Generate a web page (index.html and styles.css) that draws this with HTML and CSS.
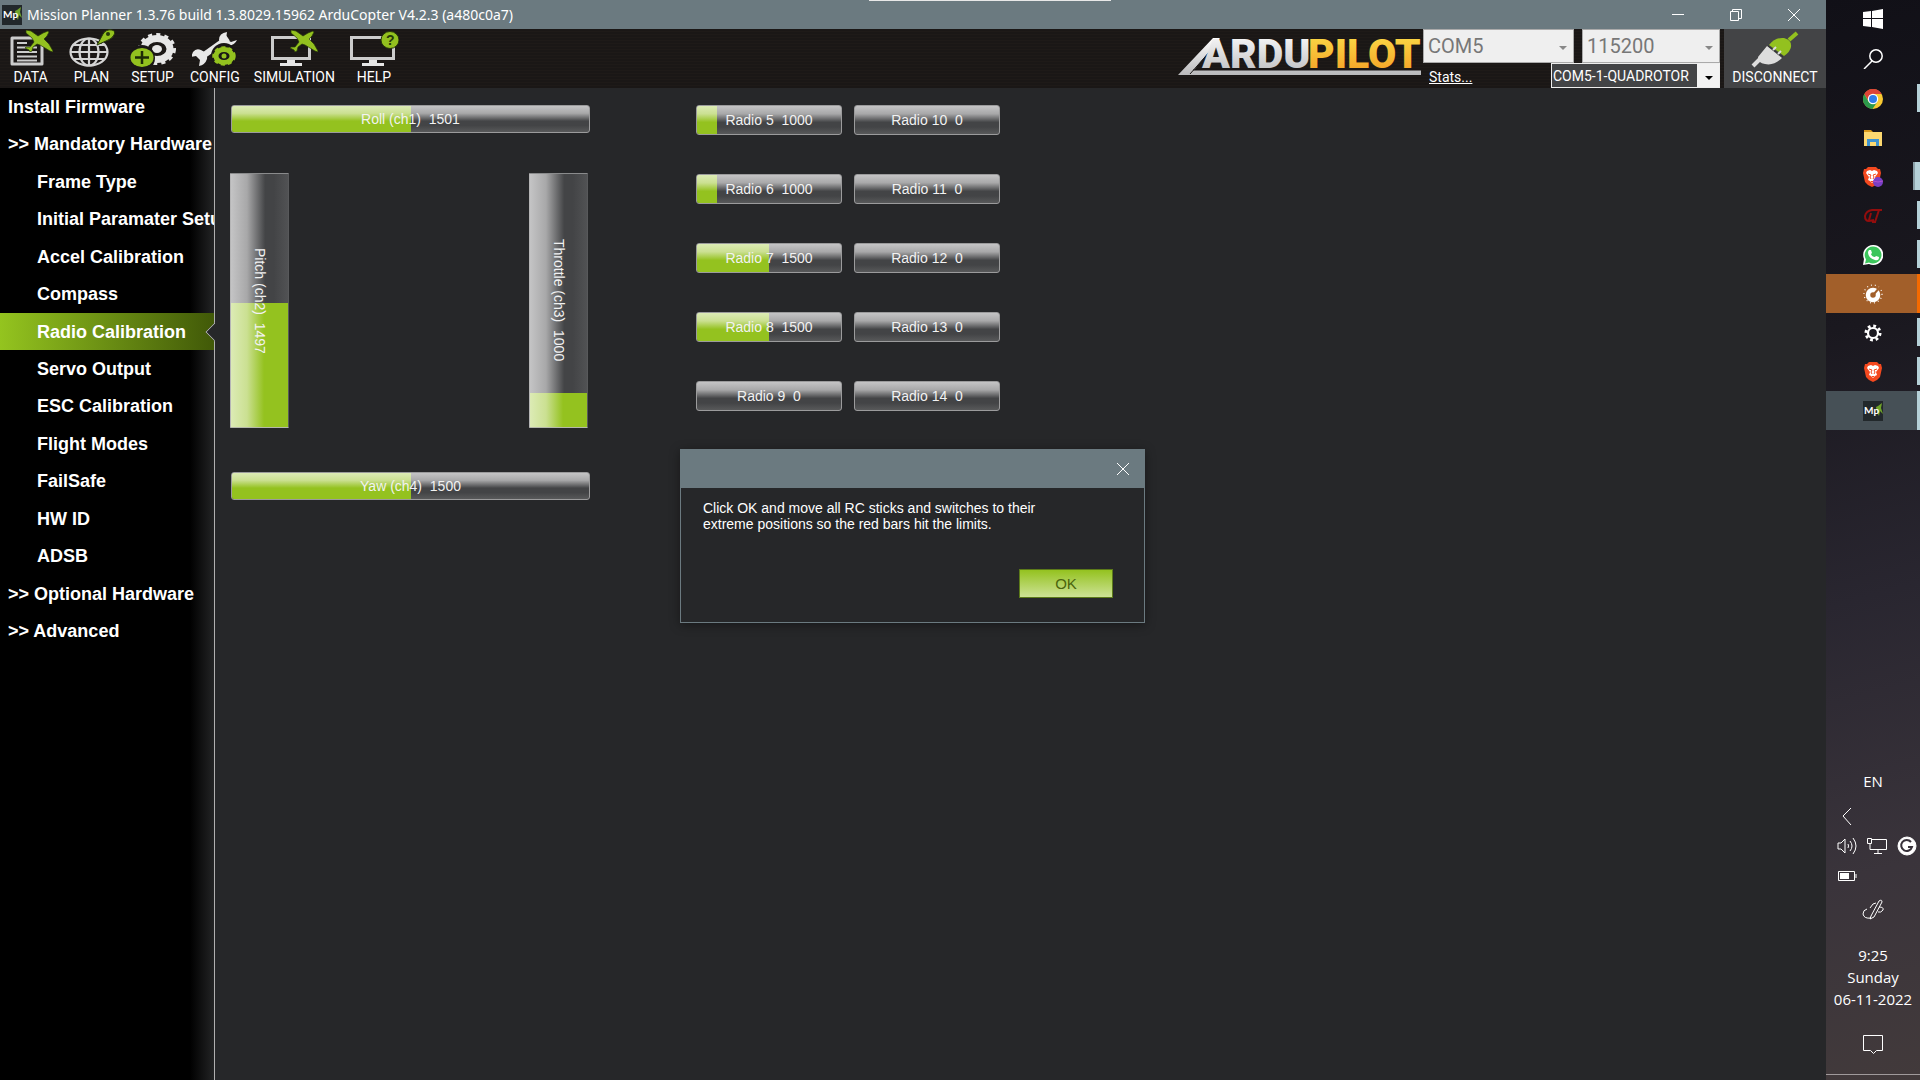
FILE: index.html
```html
<!DOCTYPE html>
<html lang="en">
<head>
<meta charset="utf-8">
<title>Mission Planner</title>
<link rel="stylesheet" href="styles.css">
</head>
<body>
<svg class="defs" aria-hidden="true">
  <defs>
    <linearGradient id="silver" x1="0" y1="0" x2="0" y2="1"><stop offset="0" stop-color="#fff"/><stop offset="1" stop-color="#b9b9bb"/></linearGradient>
    <linearGradient id="gold" x1="0" y1="0" x2="0" y2="1"><stop offset="0" stop-color="#fbe04a"/><stop offset="1" stop-color="#f49a22"/></linearGradient>
  </defs>
  <symbol id="plane" viewBox="0 0 28 22">
    <path fill="#93c11f" stroke="#26380a" stroke-width=".7" d="M1 0l5 1 7 5 5-3 5-2 1 1-2 4-3 3 5 5 4 7v1l-3-1-10-6-3-1-4 3-1 4-2 1-1-2-4-2 1-1h4l4-5-2-4-6-5z"/>
  </symbol>
  <symbol id="mp" viewBox="0 0 20 20">
    <rect width="20" height="20" fill="#22282b"/>
    <path d="M13 6l2-1 4-3-1 5 2 6-3-3-1 5-2-4z" fill="#6fa32a"/>
    <text x="1" y="13" font-family="Lato, sans-serif" font-size="10" font-weight="700" fill="#fff">Mp</text>
  </symbol>
  <symbol id="brave" viewBox="0 0 18 20">
    <path fill="#f4491f" d="M5 0h8l2 2 2 0 1 4-2 9-3 3-4 2-4-2-3-3L0 6l1-4 2 0z"/>
    <path fill="#fff" d="M4 4l3-1 2 1 2-1 3 1 1 2-3 4 1 3-2 1-2 2-2-2-2-1 1-3-3-4z"/>
    <path fill="none" stroke="#f4491f" d="M5 7l3 1-1 2 1 2M13 7l-3 1 1 2-1 2M8 14l1 1 1-1"/>
  </symbol>
</svg>

<div class="app">
  <header class="titlebar">
    <svg class="title-icon" width="20" height="20"><use href="#mp"/></svg>
    <h1 class="title">Mission Planner 1.3.76 build 1.3.8029.15962 ArduCopter V4.2.3 (a480c0a7)</h1>
    <div class="window-buttons">
      <button type="button" aria-label="Minimize"><svg width="14" height="14"><path d="M1 6.500h12"/></svg></button>
      <button type="button" aria-label="Restore"><svg width="14" height="14"><path d="M1.500 3.500h8v9h-8zM3.500 3V1.500h9v9H10"/></svg></button>
      <button type="button" aria-label="Close"><svg width="14" height="14"><path d="M1 1l12 12M13 1L1 13"/></svg></button>
    </div>
    <span class="screen-strip"></span>
  </header>

  <div class="toolbar">
    <nav class="tools" aria-label="Screens">
      <button type="button" class="tool">
        <svg width="44" height="40" viewBox="0 0 44 40"><path d="M3 9h30v26H3z" fill="none" stroke="#ccc" stroke-width="3" stroke-linejoin="round"/><path d="M8 14h10M8 18.500h20M8 23h20M8 27.500h20M8 31.500h20" stroke="#ccc" stroke-width="2"/><use href="#plane" x="16" y="1" width="28" height="22"/></svg>
        <span>DATA</span></button>
      <button type="button" class="tool">
        <svg width="46" height="40" viewBox="0 0 46 40"><g fill="none" stroke="#d4d4d4" stroke-width="2.200"><ellipse cx="20" cy="23" rx="18.500" ry="13.500"/><ellipse cx="20" cy="23" rx="9.500" ry="13.500"/><path d="M20 9v28M1 23h38M5 16h30M5 30h30"/></g><path d="M28 16l6-11q3-5 9-4 4 1 2 5-2 4-8 6z" fill="#93c11f" stroke="#26380a"/><circle cx="39" cy="5" r="2" fill="#26380a"/></svg>
        <span>PLAN</span></button>
      <button type="button" class="tool">
        <svg width="46" height="40" viewBox="0 0 46 40"><ellipse cx="27" cy="20" rx="13" ry="10.500" fill="none" stroke="#e6e6e6" stroke-width="7"/><ellipse cx="27" cy="20" rx="17" ry="14" fill="none" stroke="#e6e6e6" stroke-width="4" stroke-dasharray="4 4"/><ellipse cx="27" cy="20" rx="5" ry="4" fill="#e6e6e6"/><circle cx="12" cy="29" r="13" fill="#1a1716"/><ellipse cx="12" cy="28.500" rx="11.500" ry="9.500" fill="#93c11f"/><path d="M12 22v13M5 28.500h14" stroke="#1d2a06" stroke-width="2.500"/></svg>
        <span>SETUP</span></button>
      <button type="button" class="tool">
        <svg width="46" height="40" viewBox="0 0 46 40"><path d="M8 29L36 9" stroke="#e8e8e8" stroke-width="6"/><path d="M35 3q-8 1-8 8 2 7 9 6 7-1 9-6l-6 2-5-3zM1 23q3-4 8-2 7 3 6 9-2 6-8 7l1-6-4-4-5 1z" fill="#e8e8e8"/><circle cx="32" cy="27" r="13" fill="#1a1716"/><ellipse cx="32" cy="27" rx="8" ry="6.500" fill="none" stroke="#93c11f" stroke-width="5"/><ellipse cx="32" cy="27" rx="10.500" ry="8.500" fill="none" stroke="#93c11f" stroke-width="2.500" stroke-dasharray="4 3"/><circle cx="32" cy="27" r="2.500" fill="#93c11f"/></svg>
        <span>CONFIG</span></button>
      <button type="button" class="tool">
        <svg width="48" height="40" viewBox="0 0 48 40"><path d="M2.500 8.500h37v21h-37z" fill="none" stroke="#ccc" stroke-width="3"/><path d="M17 31h8v3h7v3H10v-3h7z" fill="#e6e6e6"/><use href="#plane" x="20" y="1" width="28" height="22"/></svg>
        <span>SIMULATION</span></button>
      <button type="button" class="tool">
        <svg width="50" height="40" viewBox="0 0 50 40"><path d="M2.500 8.500h42v21h-42z" fill="none" stroke="#ccc" stroke-width="3"/><path d="M20 31h8v3h7v3H13v-3h7z" fill="#e6e6e6"/><ellipse cx="41" cy="11" rx="9" ry="8.500" fill="#93c11f" stroke="#26380a"/><text x="37" y="16" font-family="Liberation Sans, sans-serif" font-weight="700" font-size="14" fill="#26380a">?</text></svg>
        <span>HELP</span></button>
    </nav>
    <a class="logo" href="#" aria-label="ArduPilot">
      <svg width="246" height="50" viewBox="0 0 246 50">
        <path fill="url(#silver)" d="M1 46L36 9h7L17 41h227v5z"/>
        <path d="M13 45L42 12M16 41h228" stroke="#1a1716" stroke-width="1" fill="none"/>
        <g class="logo-text"><text x="25" y="39" fill="url(#silver)">ARDU</text><text x="131" y="39" fill="url(#gold)">PILOT</text></g>
      </svg>
    </a>
    <div class="connection">
      <div class="picker port"><select aria-label="Port" disabled><option>COM5</option></select></div>
      <div class="picker baud"><select aria-label="Baud rate" disabled><option>115200</option></select></div>
      <a class="stats" href="#">Stats...</a>
      <div class="picker vehicle"><select aria-label="Vehicle"><option>COM5-1-QUADROTOR</option></select></div>
    </div>
    <button type="button" class="tool disconnect">
      <svg width="48" height="40" viewBox="0 0 48 40"><path d="M2 37l8-8" stroke="#ddd" stroke-width="4"/><path d="M7 28l9-11 15 12q-8 8-17 6-7-1-7-7z" fill="#ddd"/><path d="M18 16q6-8 15-7 8 2 7 9-1 5-7 9z" fill="#93c11f"/><path d="M38 11l8-7" stroke="#93c11f" stroke-width="4"/><path d="M17 17l15 11" stroke="#333" stroke-width="1"/><path d="M22 21l3-3M27 25l3-3" stroke="#ddd" stroke-width="2"/></svg>
      <span>DISCONNECT</span></button>
  </div>

  <div class="content">
    <aside class="sidebar">
      <nav class="menu" aria-label="Setup">
        <a href="#">Install Firmware</a>
        <a href="#">&gt;&gt; Mandatory Hardware</a>
        <a class="sub" href="#">Frame Type</a>
        <a class="sub" href="#">Initial Paramater Setup</a>
        <a class="sub" href="#">Accel Calibration</a>
        <a class="sub" href="#">Compass</a>
        <a class="sub current" href="#" aria-current="page">Radio Calibration</a>
        <a class="sub" href="#">Servo Output</a>
        <a class="sub" href="#">ESC Calibration</a>
        <a class="sub" href="#">Flight Modes</a>
        <a class="sub" href="#">FailSafe</a>
        <a class="sub" href="#">HW ID</a>
        <a class="sub" href="#">ADSB</a>
        <a href="#">&gt;&gt; Optional Hardware</a>
        <a href="#">&gt;&gt; Advanced</a>
      </nav>
    </aside>

    <main class="panel">
      <section class="sticks">
        <div class="bar"><i class="fill" style="width:50%"></i><span>Roll (ch1)&nbsp; 1501</span></div>
        <div class="columns">
          <div class="bar tall"><i class="fill" style="height:49%"></i><span>Pitch (ch2)&nbsp; 1497</span></div>
          <div class="bar tall"><i class="fill" style="height:13.500%"></i><span>Throttle (ch3)&nbsp; 1000</span></div>
        </div>
        <div class="bar"><i class="fill" style="width:50%"></i><span>Yaw (ch4)&nbsp; 1500</span></div>
      </section>
      <section class="radios">
        <div class="bar"><i class="fill" style="width:14%"></i><span>Radio 5&nbsp; 1000</span></div>
        <div class="bar"><span>Radio 10&nbsp; 0</span></div>
        <div class="bar"><i class="fill" style="width:14%"></i><span>Radio 6&nbsp; 1000</span></div>
        <div class="bar"><span>Radio 11&nbsp; 0</span></div>
        <div class="bar"><i class="fill" style="width:50%"></i><span>Radio 7&nbsp; 1500</span></div>
        <div class="bar"><span>Radio 12&nbsp; 0</span></div>
        <div class="bar"><i class="fill" style="width:50%"></i><span>Radio 8&nbsp; 1500</span></div>
        <div class="bar"><span>Radio 13&nbsp; 0</span></div>
        <div class="bar"><span>Radio 9&nbsp; 0</span></div>
        <div class="bar"><span>Radio 14&nbsp; 0</span></div>
      </section>

      <div class="dialog" role="dialog" aria-describedby="dialog-text">
        <div class="dialog-head"><button type="button" aria-label="Close"><svg width="14" height="14"><path d="M1 1l12 12M13 1L1 13"/></svg></button></div>
        <p id="dialog-text">Click OK and move all RC sticks and switches to their<br>extreme positions so the red bars hit the limits.</p>
        <button type="button" class="ok">OK</button>
      </div>
    </main>
  </div>
</div>

<aside class="taskbar">
  <div class="apps">
    <button type="button" class="task" aria-label="Start"><svg width="20" height="20"><path fill="#fff" d="M0 3l8-1v7H0zM9 2l11-2v9H9zM0 10h8v8l-8-1zM9 10h11v10L9 18z"/></svg></button>
    <button type="button" class="task" aria-label="Search"><svg width="20" height="20" fill="none" stroke="#fff" stroke-width="1.500"><circle cx="13" cy="7" r="6.200"/><path d="M9 12l-8 8"/></svg></button>
    <button type="button" class="task open" aria-label="Chrome"><svg width="20" height="20"><circle cx="10" cy="10" r="10" fill="#f9c932"/><path fill="#dc4437" d="M10 10V5h8.700A10 10 0 0 0 1.300 5l4.400 7.500z"/><path fill="#2b9a4c" d="M1.300 5A10 10 0 0 0 9.500 20l5-7.500-4.500 2-4.500-2z"/><circle cx="10" cy="10" r="5.200" fill="#fff"/><circle cx="10" cy="10" r="4" fill="#2f7de9"/></svg></button>
    <button type="button" class="task" aria-label="File Explorer"><svg width="20" height="20"><path fill="#d99a1c" d="M1 2h7l2 2v3H1z"/><path fill="#fcd870" d="M1 4h18v14H1z"/><path fill="#3f93cf" d="M4 11h12v7h-3v-4H7v4H4z"/></svg></button>
    <button type="button" class="task open double" aria-label="Brave Private"><svg width="20" height="20"><use href="#brave" width="18" height="20"/><circle cx="15" cy="15" r="5" fill="#7a3fc4"/><path d="M10 14q5 2 10 0" stroke="#b04fd0" fill="none"/></svg></button>
    <button type="button" class="task open" aria-label="Editor"><svg width="22" height="16"><path fill="none" stroke="#930d0d" stroke-width="2" d="M20 2H10Q4 3 3 8q0 5 4 5l5-1M17 2l-4 12M10 14h4M9 5L7 12"/></svg></button>
    <button type="button" class="task open" aria-label="WhatsApp"><svg width="20" height="20"><path fill="#fff" d="M10 0a10 10 0 1 1-4 19l-6 1 1-6A10 10 0 0 1 10 0z"/><path fill="#3cc65c" d="M10 1.500a8.500 8.500 0 1 1-4 16l-4 1 1-4a8.500 8.500 0 0 1 7-13z"/><path fill="#fff" d="M6 5l2 0 1 3-1 1q1 3 4 3l1-1 3 1q0 4-4 3-7-2-7-8z"/></svg></button>
    <button type="button" class="task alert" aria-label="Timer"><svg width="20" height="20"><circle cx="10" cy="10" r="9" fill="none" stroke="#fff" stroke-dasharray="1 3" stroke-width="1.200"/><circle cx="10" cy="11" r="5" fill="none" stroke="#fff" stroke-width="4.500"/><path d="M11 10l6-7" stroke="#a25f2a" stroke-width="2"/></svg></button>
    <button type="button" class="task open" aria-label="Settings"><svg width="18" height="18"><circle cx="9" cy="9" r="5" fill="none" stroke="#fff" stroke-width="2.200"/><circle cx="9" cy="9" r="7" fill="none" stroke="#fff" stroke-width="3" stroke-dasharray="2.750 2.750"/></svg></button>
    <button type="button" class="task open" aria-label="Brave"><svg width="18" height="20"><use href="#brave" width="18" height="20"/></svg></button>
    <button type="button" class="task open active" aria-label="Mission Planner"><svg width="20" height="20"><use href="#mp"/></svg></button>
  </div>
  <div class="tray">
    <span class="lang">EN</span>
    <div class="tray-icons">
      <svg width="20" height="20"><path d="M14 2L6 10l8 9"/></svg><span></span><span></span>
      <svg width="20" height="20"><path d="M1 7h3l4-4v14l-4-4H1zM11 8q1 2 0 4M13 5q4 5 0 10M16 2q6 8 0 16"/></svg>
      <svg width="20" height="20"><path d="M5 3.500h14.500v10H3V8M.500 2.500h4v5h-4zM11 14v3M7 17.500h8"/></svg>
      <svg width="20" height="20"><circle cx="10" cy="10" r="9" fill="#fff"/><path d="M14 6a5.500 5.500 0 1 0 1 5h-4" stroke="#38323a" stroke-width="2"/></svg>
      <svg width="20" height="20"><path d="M1.500 5.500h16v9h-16zM19 8v4"/><path fill="#fff" stroke="none" d="M3 7h9v6H3z"/></svg>
    </div>
    <svg class="pen" width="22" height="22"><path d="M5 10q-4 1-4 5 1 5 8 4M9 17L17 2q3-2 3 1l-8 15-4 2zM17 8q5 0 4 3-2 3-5 2M8 9l3-4 3-1"/></svg>
    <div class="clock"><span>9:25</span><span>Sunday</span><span>06-11-2022</span></div>
    <svg class="notes" width="20" height="21"><path d="M.500.500h19v15h-6l-3 3-3-3h-7z"/></svg>
  </div>
</aside>
</body>
</html>
```
FILE: styles.css
```css
* { box-sizing: border-box; }
body {
  margin: 0;
  min-height: 100vh;
  display: flex;
  background: #262729;
  color: #fff;
  font: 14px/16px "Liberation Sans", Arial, sans-serif;
}
h1, p { margin: 0; font-weight: inherit; }
button { padding: 0; border: 0; background: none; color: inherit; font: inherit; }
a { color: inherit; text-decoration: none; }
svg { display: block; }
.defs { position: absolute; width: 0; height: 0; }

.app { flex: 1; min-width: 0; display: flex; flex-direction: column; }

/* Title bar */
.titlebar {
  position: relative;
  display: flex;
  align-items: center;
  height: 29px;
  padding-left: 2px;
  background: #6b7a80;
}
.title { flex: 1; margin-left: 5px; font: 14px/28px "Noto Sans", "Open Sans", sans-serif; }
.window-buttons { display: flex; margin-right: 3px; }
.window-buttons button { width: 58px; display: grid; place-items: center; }
.window-buttons svg, .dialog-head svg { fill: none; stroke: #fff; }
.screen-strip { position: absolute; top: 0; left: 869px; width: 242px; height: 1px; background: #e8e8e8; }

/* Toolbar */
.toolbar {
  display: flex;
  height: 59px;
  background: repeating-linear-gradient(#1a1716 0 2px, #1e1a18 2px 3px);
}
.tools { display: flex; flex: 1; }
.tool {
  display: flex;
  flex-direction: column;
  align-items: center;
  min-width: 61px;
  padding: 0 7px;
  font: 14px/16px Roboto, "Liberation Sans", sans-serif;
}
.logo-text { font: 900 41px Roboto, sans-serif; }
.connection {
  display: grid;
  grid-template-columns: 127px 24px 8px 138px;
  grid-template-rows: 34px 25px;
  width: 297px;
}
.picker { position: relative; }
.picker select {
  appearance: none;
  width: 100%;
  height: 100%;
  margin: 0;
  padding: 0 4px;
  border: 1px solid #aaa;
  border-radius: 0;
  background: #efefef;
  color: #777;
  opacity: 1;
  font: 20px/30px Roboto, "Liberation Sans", sans-serif;
}
.picker::after {
  content: "";
  position: absolute;
  right: 7px;
  top: 50%;
  border: 4px solid transparent;
  border-top-color: #888;
  border-bottom: 0;
}
.port { grid-column: 1 / 3; }
.baud { grid-column: 4; }
.stats {
  grid-column: 1;
  padding: 6px;
  font: 14px/16px Roboto, "Liberation Sans", sans-serif;
  text-decoration: underline;
}
.vehicle { grid-column: 2 / 5; margin-left: 1px; }
.vehicle select {
  padding: 0 1px;
  border-color: #eee;
  background: linear-gradient(to left, #f2f2f2 22px, #434446 22px);
  color: #fff;
  font-size: 14px;
  line-height: 20px;
}
.vehicle::after { border-top-color: #000; }
.disconnect { width: 102px; margin-left: 4px; background: #434446; }

/* Setup menu */
.content { flex: 1; display: flex; }
.sidebar {
  width: 215px;
  border-right: 1px solid #b0b0b0;
  background: linear-gradient(to right, #000 190px, #232425);
}
.menu { display: grid; grid-auto-rows: 1fr; height: 562px; }
.menu a {
  display: flex;
  align-items: center;
  padding-left: 8px;
  overflow: hidden;
  white-space: nowrap;
  font-size: 18px;
  font-weight: 700;
}
.menu .sub { padding-left: 37px; }
.menu .current {
  position: relative;
  overflow: visible;
  background: linear-gradient(to right, #94c41f, #415908);
}
.current::after {
  content: "";
  position: absolute;
  right: -8px;
  top: 12px;
  width: 13px;
  height: 13px;
  border: 1px solid #b0b0b0;
  border-width: 0 0 1px 1px;
  background: #262729;
  transform: rotate(45deg);
  clip-path: polygon(0 0, 100% 100%, 0 100%);
}

/* Channel bars */
.panel { position: relative; flex: 1; display: flex; align-items: flex-start; gap: 106px; padding: 17px 16px; }
.sticks { width: 359px; display: grid; gap: 40px; }
.columns { display: flex; justify-content: space-between; height: 255px; margin: 0 2px 4px -1px; }
.bar {
  position: relative;
  display: grid;
  place-items: center;
  height: 28px;
  border: 1px solid #9b9b9c;
  border-radius: 3px;
  background: linear-gradient(#c4c4c5, #a8a8a9 28%, #434446 58%, #434446 75%, #58595a);
  color: #f2f2f2;
  overflow: hidden;
}
.bar span { position: relative; }
.fill {
  position: absolute;
  inset: 0 auto 0 0;
  background: linear-gradient(#dcebb5, #cbe092 28%, #94c21f 58%, #94c21f);
}
.tall {
  width: 59px;
  height: auto;
  border-color: #8a8b8c #58595b #b5b8ab #b5b5b6;
  border-radius: 1px;
  background: linear-gradient(to right, #c4c4c5, #a8a8a9 28%, #434446 60%, #434446 75%, #515254);
}
.tall .fill { inset: auto 0 0; background: linear-gradient(to right, #dcebb5, #cbe092 28%, #94c21f 58%, #94c21f); }
.tall span { writing-mode: vertical-rl; }
.radios { width: 304px; display: grid; grid-template-columns: 1fr 1fr; gap: 39px 12px; }
.radios .bar { height: 30px; }

/* Message box */
.dialog {
  position: absolute;
  left: 465px;
  top: 361px;
  width: 465px;
  display: flex;
  flex-direction: column;
  border: 1px solid #6b7a80;
  background: #262729;
  box-shadow: 0 2px 10px #0006;
}
.dialog-head { display: flex; justify-content: flex-end; height: 38px; padding-right: 14px; background: #6b7a80; }
.dialog p { padding: 12px 22px 0; }
.ok {
  align-self: flex-end;
  width: 94px;
  height: 29px;
  margin: 37px 31px 24px;
  border: 1px solid #5c7a1a;
  background: linear-gradient(#94c21f, #cde296);
  color: #4a650d;
  font-size: 15px;
}

/* Desktop taskbar */
.taskbar {
  width: 94px;
  display: flex;
  flex-direction: column;
  justify-content: space-between;
  background: linear-gradient(165deg, #111017, #1a181f 30%, #292630 55%, #3a343b 80%, #423a3b);
}
.apps { display: grid; grid-template-rows: 38px 41px; grid-auto-rows: 39px; }
.task { display: grid; place-items: center; position: relative; }
.open::after, .alert::after {
  content: "";
  position: absolute;
  right: 0;
  top: 5px;
  width: 3px;
  height: 28px;
  background: #b5d1d8;
}
.double::after { width: 5px; border-left: 2px solid #8aa0a8; }
.alert { background: #a25f2a; }
.alert::after { top: 0; height: 100%; background: #f56a00; }
.active { background: #465056; }
.active::after { top: 0; height: 100%; }
.tray {
  display: flex;
  flex-direction: column;
  align-items: center;
  padding-bottom: 18px;
  border-bottom: 1px solid #a09a9b;
  margin-bottom: 5px;
  font: 15px/22px "Open Sans", "Noto Sans", sans-serif;
}
.tray svg { fill: none; stroke: #fff; }
.lang { margin-bottom: 14px; }
.tray-icons { display: grid; grid-template-columns: repeat(3, 20px); gap: 10px; margin-left: 8px; }
.pen { margin: 13px 0 23px; }
.clock { display: grid; justify-items: center; margin-bottom: 25px; }
```
